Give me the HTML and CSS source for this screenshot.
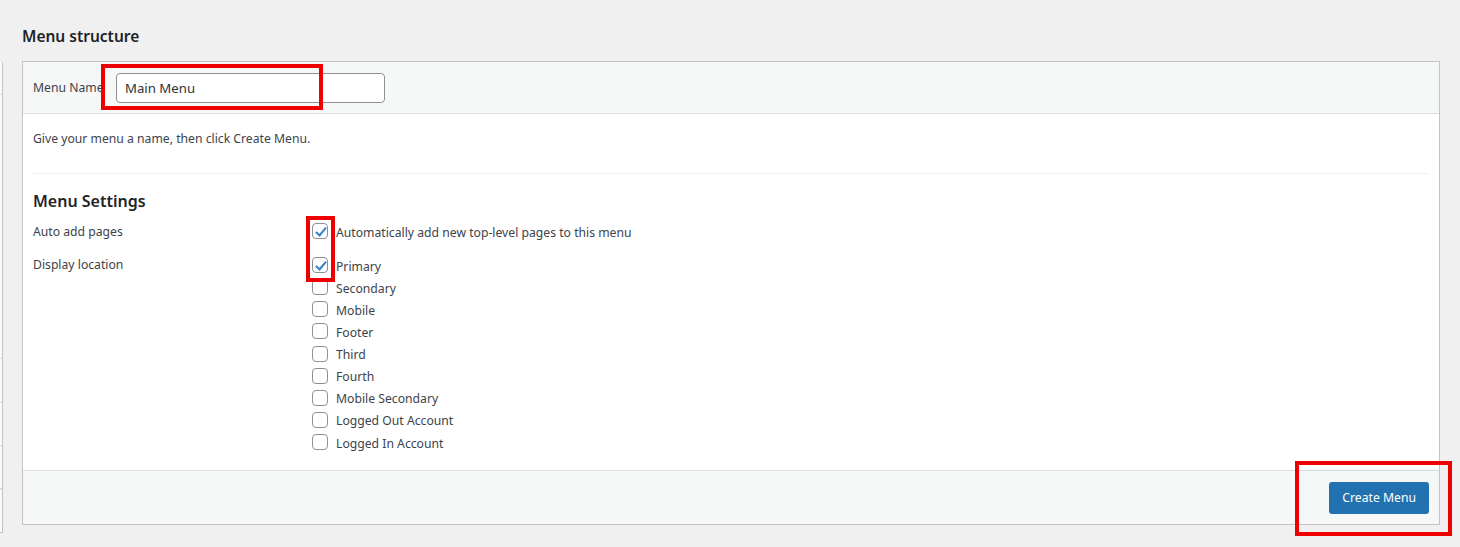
FILE: index.html
```html
<!DOCTYPE html>
<html>
<head>
<meta charset="utf-8">
<link rel="stylesheet" href="styles.css">
</head>
<body>
<div class="layout">
  <div class="side-sliver">
    <div class="sliver-row r1"></div>
    <div class="sliver-row r2"></div>
    <div class="sliver-row r3"></div>
    <div class="sliver-row r4"></div>
    <div class="sliver-row r5"></div>
    <div class="sliver-row r6"></div>
  </div>
  <div class="main">
    <h2 class="title">Menu structure</h2>
    <div class="box">
      <div class="box-header">
        <label class="name-label">Menu Name</label>
        <div class="input">Main Menu</div>
      </div>
      <div class="box-body">
        <p class="hint">Give your menu a name, then click Create Menu.</p>
        <div class="sep"></div>
        <h3 class="settings-title">Menu Settings</h3>
        <div class="settings">
          <div class="s-label">Auto add pages</div>
          <div class="s-field">
            <div class="opt"><span class="cb checked"></span><span>Automatically add new top-level pages to this menu</span></div>
          </div>
          <div class="s-label s-label2">Display location</div>
          <div class="s-field s-field2">
            <div class="opt"><span class="cb checked"></span><span>Primary</span></div>
            <div class="opt"><span class="cb"></span><span>Secondary</span></div>
            <div class="opt"><span class="cb"></span><span>Mobile</span></div>
            <div class="opt"><span class="cb"></span><span>Footer</span></div>
            <div class="opt"><span class="cb"></span><span>Third</span></div>
            <div class="opt"><span class="cb"></span><span>Fourth</span></div>
            <div class="opt"><span class="cb"></span><span>Mobile Secondary</span></div>
            <div class="opt"><span class="cb"></span><span>Logged Out Account</span></div>
            <div class="opt"><span class="cb"></span><span>Logged In Account</span></div>
          </div>
        </div>
      </div>
      <div class="box-footer">
        <div class="btn">Create Menu</div>
      </div>
    </div>
  </div>
</div>
<div class="mark mark-name"></div>
<div class="mark mark-check"></div>
<div class="mark mark-btn"></div>
</body>
</html>
```

FILE: styles.css
```css
html, body {
  margin: 0;
  padding: 0;
  background: #f0f0f1;
  font-family: "Noto Sans", "Open Sans", sans-serif;
  color: #3c434a;
  font-size: 12.2px;
}
.layout {
  display: flex;
  align-items: flex-start;
  width: 1460px;
  height: 547px;
  overflow: hidden;
}
.side-sliver {
  width: 2px;
  margin-top: 62px;
  height: 470px;
  background: #fafafa;
  border-right: 1px solid #c3c4c7;
  border-bottom: 1px solid #c3c4c7;
  display: flex;
  flex-direction: column;
}
.sliver-row { border-bottom: 1px solid #dcdcde; }
.r1 { height: 32px; }
.r2 { height: 263px; }
.r3 { height: 43px; }
.r4 { height: 42px; }
.r5 { height: 42px; }
.main {
  margin-left: 19px;
  width: 1418px;
}
.title {
  margin: 25px 0 0 0;
  font-size: 15.5px;
  font-weight: 600;
  color: #1d2327;
  line-height: 22px;
  height: 22px;
}
.box {
  margin-top: 14px;
  border: 1px solid #c3c4c7;
  background: #fff;
}
.box-header {
  background: #f6f7f7;
  border-bottom: 1px solid #dcdcde;
  height: 51px;
  display: flex;
  align-items: center;
  padding: 0 10px;
}
.name-label {
  width: 83px;
  color: #3c434a;
}
.input {
  width: 251px;
  height: 28px;
  border: 1px solid #8c8f94;
  border-radius: 4px;
  background: #fff;
  padding: 0 8px;
  font-size: 13.2px;
  line-height: 28px;
  color: #2c3338;
  margin-top: 1px;
}
.box-body {
  padding: 0 10px;
  height: 356px;
}
.hint {
  margin: 0;
  padding-top: 16px;
  line-height: 18px;
  height: 32px;
}
.sep {
  margin-top: 11px;
  height: 1px;
  background: #f0f0f1;
}
.settings-title {
  margin: 16px 0 0 0;
  font-size: 16px;
  font-weight: 600;
  color: #1d2327;
  line-height: 22px;
}
.settings {
  display: grid;
  grid-template-columns: 279px 1fr;
  margin-top: 8px;
}
.s-label {
  line-height: 22px;
  padding-top: 1px;
}
.s-label2 { margin-top: 10px; }
.s-field2 { margin-top: 11px; }
.opt {
  display: flex;
  align-items: center;
  height: 22.13px;
  gap: 8px;
}
.opt span:last-child { position: relative; top: 1px; }
.cb {
  width: 14px;
  height: 14px;
  border: 1px solid #8c8f94;
  border-radius: 4px;
  background: #fff;
  position: relative;
  flex: none;
}
.cb.checked::after {
  content: "";
  position: absolute;
  left: 4.5px;
  top: 0.5px;
  width: 4px;
  height: 9px;
  border: solid #3582c4;
  border-width: 0 2.5px 2.5px 0;
  transform: rotate(40deg);
}
.box-footer {
  background: #f6f7f7;
  border-top: 1px solid #dcdcde;
  height: 53px;
  display: flex;
  justify-content: flex-end;
  align-items: center;
  padding: 0 10px;
}
.btn {
  background: #2271b1;
  color: #fff;
  border-radius: 3px;
  height: 32px;
  line-height: 32px;
  padding: 0 13px;
  margin-top: 1px;
}
.mark {
  position: absolute;
  border: 4px solid #ee0000;
  box-sizing: border-box;
}
.mark-name { left: 101px; top: 64px; width: 222px; height: 46px; }
.mark-check { left: 306px; top: 216px; width: 29px; height: 66px; }
.mark-btn { left: 1295px; top: 461px; width: 157px; height: 75px; }
```
